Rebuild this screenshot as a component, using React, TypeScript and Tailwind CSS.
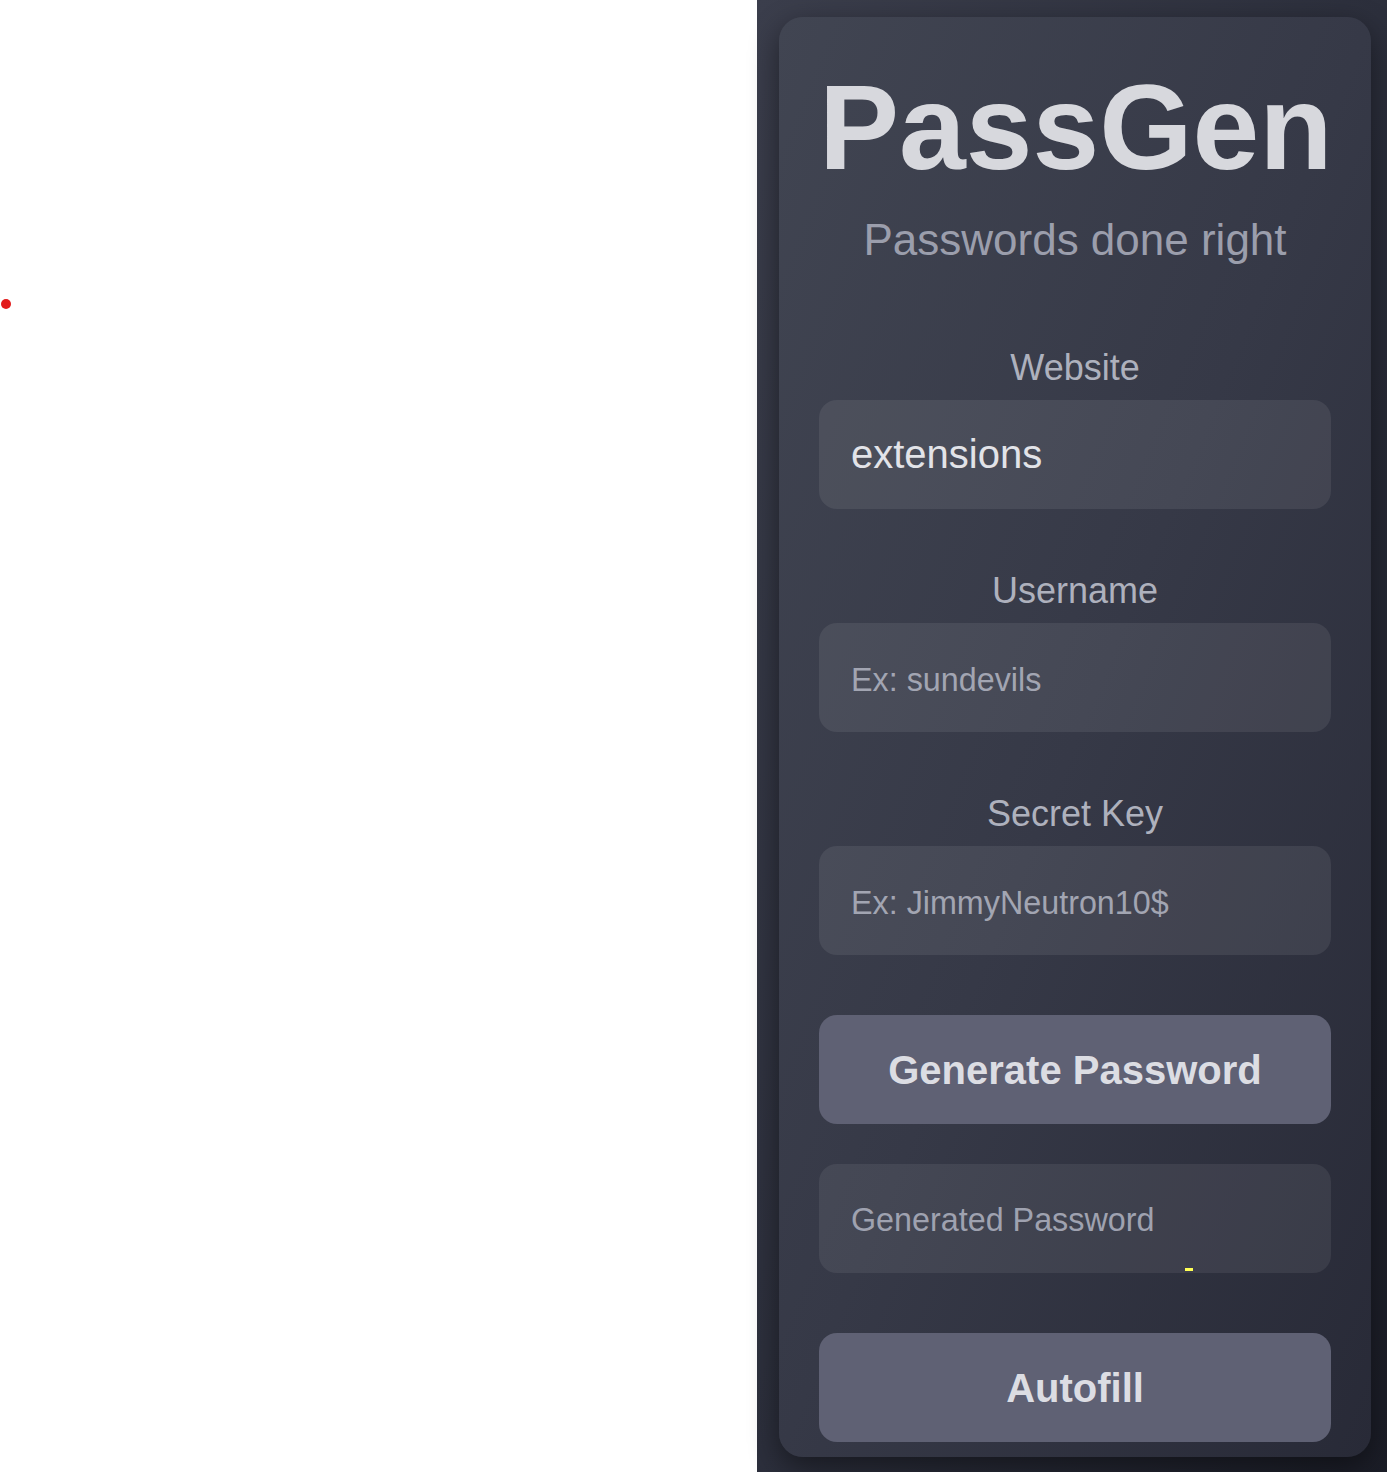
import React from "react";

const font = { fontFamily: '"Liberation Sans", Arial, sans-serif' };

function Field({ label, value, placeholder, first }: { label: string; value?: string; placeholder: string; first?: boolean }) {
  return (
    <div className={first ? "mt-[83px] flex flex-col" : "mt-[62px] flex flex-col"}>
      <div className="h-[40px] text-center text-[36px] leading-[40px] text-[#aeb1bd]">{label}</div>
      <input
        readOnly
        defaultValue={value}
        placeholder={placeholder}
        className="mt-[12px] h-[109px] w-full rounded-[18px] bg-white/[0.08] pl-[32px] pr-4 text-[40px] text-[#e2e3e8] outline-none placeholder:text-[32.3px] placeholder:text-[#a2a5b2]"
        style={font}
      />
    </div>
  );
}

export default function App() {
  return (
    <div className="relative flex min-h-[1472px] w-full justify-end bg-white" style={font}>
      <div className="absolute left-[1px] top-[299px] h-[10px] w-[10px] rounded-full bg-[#e21b1b]" />
      <div className="h-[1472px] w-[630px] bg-gradient-to-br from-[#3b3e4c] via-[#2c2f3c] to-[#1b1d27] pl-[22px] pr-[16px] pt-[17px]">
        <div className="relative flex h-[1440px] flex-col rounded-[24px] bg-gradient-to-br from-[#414552] via-[#363947] to-[#282a37] px-[40px] pt-[50px] shadow-[0_10px_30px_rgba(0,0,0,0.45)]">
          <h1 className="h-[120px] text-center text-[120px] font-bold leading-[120px] text-[#d7d8dd]">PassGen</h1>
          <div className="mt-[28px] h-[50px] text-center text-[44px] leading-[50px] text-[#9b9eac]">Passwords done right</div>

          <Field first label="Website" value="extensions" placeholder="Ex: google.com" />
          <Field label="Username" placeholder="Ex: sundevils" />
          <Field label="Secret Key" placeholder="Ex: JimmyNeutron10$" />

          <button className="mt-[60px] h-[109px] w-full rounded-[18px] bg-[#5f6174] text-[40px] font-bold text-[#dcdde3]">
            Generate Password
          </button>

          <div className="relative mt-[40px] flex h-[109px] w-full items-center rounded-[18px] bg-white/[0.07] pl-[32px] pt-[3px] text-[32.3px] text-[#9fa2b0]">
            Generated Password
            <div className="absolute left-[366px] top-[104px] h-[3px] w-[8px] bg-[#ffff55]" />
          </div>

          <button className="mt-[60px] h-[109px] w-full rounded-[18px] bg-[#5f6174] text-[40px] font-bold text-[#dcdde3]">
            Autofill
          </button>
        </div>
      </div>
    </div>
  );
}
